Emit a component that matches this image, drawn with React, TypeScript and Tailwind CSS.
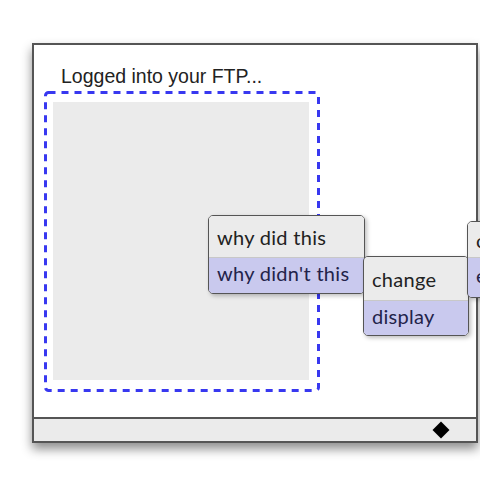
import React from "react";

const menuFont = { fontFamily: "Lato, 'Open Sans', sans-serif" };

function Menu({
  className,
  top,
  bottom,
  topH,
  bottomH,
}: {
  className: string;
  top: string;
  bottom: string;
  topH: string;
  bottomH: string;
}) {
  return (
    <div
      className={`absolute flex flex-col overflow-hidden rounded-[5px] border-[1.5px] border-[#555] shadow-[2px_2px_4px_rgba(0,0,0,0.25)] text-[20px] tracking-[0.3px] ${className}`}
      style={menuFont}
    >
      <div className={`flex items-center bg-[#ebebeb] pl-2 text-[#222] ${topH}`}>{top}</div>
      <div className={`flex items-center border-t border-[#c8c8c8] bg-[#c9c9ee] pb-[5px] pl-2 text-[#23234a] ${bottomH}`}>{bottom}</div>
    </div>
  );
}

export default function App() {
  return (
    <div className="relative h-[480px] w-[480px] overflow-hidden bg-white pl-[32px] pt-[43px]">
      <div className="flex h-[400px] w-[446px] flex-col border-2 border-[#555] bg-white shadow-[0_6px_10px_rgba(0,0,0,0.45)]">
        <div className="flex flex-1 flex-col pl-[10px] pt-[20px]">
          <div
            className="ml-[17px] h-[22px] text-[19.5px] leading-[22px] text-[#222]"
            style={{ fontFamily: "'Liberation Sans', Arial, sans-serif" }}
          >
            Logged into your FTP...
          </div>
          <div className="relative mt-[4px] h-[301px] w-[276px] pb-[12px] pl-[9px] pr-[11px] pt-[11px]">
            <svg className="absolute inset-0" width="276" height="301" viewBox="0 0 276 301">
              <rect
                x="1.5"
                y="1.5"
                width="273"
                height="298"
                rx="3"
                fill="none"
                stroke="#3838f0"
                strokeWidth="3"
                strokeDasharray="7 6"
              />
            </svg>
            <div className="h-full w-full bg-[#ebebeb]" />
          </div>
        </div>
        <div className="flex h-[24px] items-center justify-end border-t-2 border-[#555] bg-[#ebebeb] pr-[29px]">
          <div className="h-[12px] w-[12px] rotate-45 bg-black" />
        </div>
      </div>

      <Menu
        className="left-[208px] top-[215px] w-[157px]"
        top="why did this"
        bottom="why didn't this"
        topH="h-[41px]"
        bottomH="h-[36px]"
      />
      <Menu
        className="left-[363px] top-[256px] w-[106px]"
        top="change"
        bottom="display"
        topH="h-[43px]"
        bottomH="h-[35px]"
      />
      <Menu
        className="left-[467px] top-[221px] w-[100px]"
        top="change"
        bottom="edit"
        topH="h-[35px]"
        bottomH="h-[40px]"
      />
    </div>
  );
}
